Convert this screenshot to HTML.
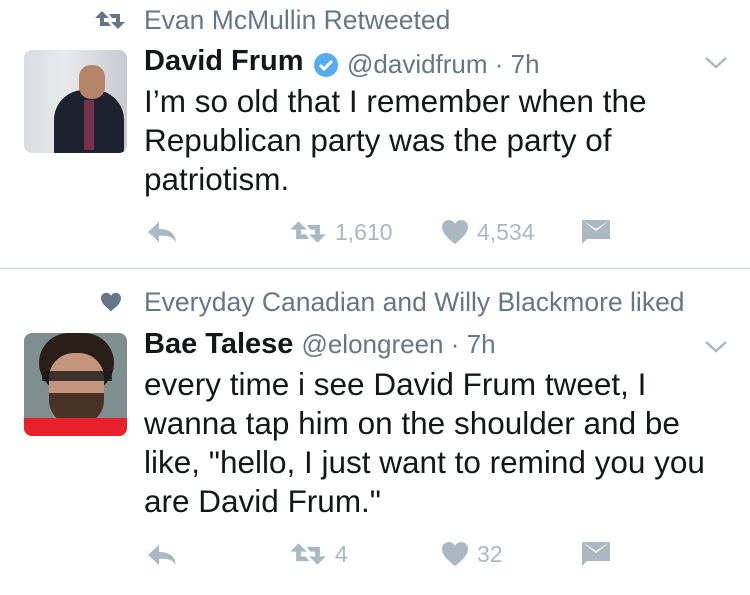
<!DOCTYPE html>
<html><head><meta charset="utf-8"><style>
body{margin:0;width:750px;height:595px;background:#fff;position:relative;overflow:hidden;font-family:"Liberation Sans",sans-serif;}
.a{position:absolute;white-space:nowrap;}
.ctx{font-size:26.5px;color:#657786;}
.name{font-size:29px;font-weight:bold;color:#14171a;}
.handle{font-size:26px;color:#657786;font-weight:normal;}
.body{font-size:31.5px;color:#14171a;line-height:39px;}
.cnt{font-size:23px;color:#aab8c2;}
.av{position:absolute;width:103px;height:103px;border-radius:8px;overflow:hidden;}
</style></head><body>
<svg class="a" style="left:94px;top:10px" width="32" height="20" viewBox="0 0 32 20"><path d="M8 1 L1 8 H6 V16 H17 L14 12 H10 V8 H15 Z M24 19 L31 12 H26 V4 H15 L18 8 H22 V12 H17 Z" fill="#657786"/></svg>
<div class="a ctx" style="left:144px;top:5px">Evan McMullin Retweeted</div>
<div class="av" style="left:24px;top:50px;background:linear-gradient(90deg,#d9dbe0 0%,#e8e9ec 40%,#c8cad0 100%)">
<div style="position:absolute;left:30px;top:40px;width:70px;height:70px;border-radius:30px 30px 0 0;background:#1e2230"></div>
<div style="position:absolute;left:55px;top:15px;width:26px;height:34px;border-radius:12px;background:#b58468"></div>
<div style="position:absolute;left:60px;top:50px;width:10px;height:50px;background:#7a3048"></div>
</div>
<div class="a name" style="left:144px;top:45px">David Frum</div>
<svg class="a" style="left:313px;top:52px" width="26" height="26" viewBox="0 0 26 26"><circle cx="13" cy="13" r="12" fill="#55acee"/><path d="M7 13 L11 17 L19 9" stroke="#fff" stroke-width="3" fill="none"/></svg>
<div class="a handle" style="left:347px;top:49px">@davidfrum · 7h</div>
<svg class="a" style="left:704px;top:56px" width="24" height="14" viewBox="0 0 24 14"><path d="M2 2 L12 11 L22 2" stroke="#aab8c2" stroke-width="2.5" fill="none"/></svg>
<div class="a body" style="left:144px;top:82px">I’m so old that I remember when the<br>Republican party was the party of<br>patriotism.</div>
<svg class="a" style="left:147px;top:220px" width="32" height="24" viewBox="0 0 32 24"><path d="M12 2 L1 12 L12 22 V16 C20 15 26 17 29 22 C28 13 22 9 12 9 Z" fill="#aab8c2"/></svg>
<svg class="a" style="left:289px;top:220px" width="38" height="24" viewBox="0 0 32 20"><path d="M8 1 L1 8 H6 V16 H17 L14 12 H10 V8 H15 Z M24 19 L31 12 H26 V4 H15 L18 8 H22 V12 H17 Z" fill="#aab8c2"/></svg>
<div class="a cnt" style="left:335px;top:219px">1,610</div>
<svg class="a" style="left:441px;top:219px" width="28" height="26" viewBox="0 0 28 26"><path d="M14 25 C5 18 1 13 1 8 C1 4 4 1 8 1 C11 1 13 3 14 5 C15 3 17 1 20 1 C24 1 27 4 27 8 C27 13 23 18 14 25 Z" fill="#aab8c2"/></svg>
<div class="a cnt" style="left:477px;top:219px">4,534</div>
<svg class="a" style="left:581px;top:219px" width="30" height="26" viewBox="0 0 30 26"><path d="M1 1 L15 12 L29 1 V20 H6 L1 25 Z" fill="#aab8c2"/><path d="M1 1 H29 L15 10 Z" fill="#aab8c2"/></svg>
<div class="a" style="left:0;top:268px;width:750px;height:1px;background:#ccd6dd"></div>
<svg class="a" style="left:100px;top:292px" width="22" height="20" viewBox="0 0 28 26"><path d="M14 25 C5 18 1 13 1 8 C1 4 4 1 8 1 C11 1 13 3 14 5 C15 3 17 1 20 1 C24 1 27 4 27 8 C27 13 23 18 14 25 Z" fill="#657786"/></svg>
<div class="a ctx" style="left:144px;top:287px">Everyday Canadian and Willy Blackmore liked</div>
<div class="av" style="left:24px;top:333px;background:#7f8f8f">
<div style="position:absolute;left:15px;top:0;width:75px;height:60px;border-radius:35px;background:#2a1e18"></div>
<div style="position:absolute;left:25px;top:20px;width:55px;height:70px;border-radius:25px;background:#c4957c"></div>
<div style="position:absolute;left:25px;top:60px;width:55px;height:32px;border-radius:0 0 25px 25px;background:#4a3226"></div>
<div style="position:absolute;left:18px;top:38px;width:70px;height:10px;background:#1a1a1a;opacity:.8"></div>
<div style="position:absolute;left:0;top:85px;width:103px;height:18px;background:#e8202a"></div>
</div>
<div class="a name" style="left:144px;top:328px">Bae Talese <span class="handle">@elongreen · 7h</span></div>
<svg class="a" style="left:704px;top:340px" width="24" height="14" viewBox="0 0 24 14"><path d="M2 2 L12 11 L22 2" stroke="#aab8c2" stroke-width="2.5" fill="none"/></svg>
<div class="a body" style="left:144px;top:365px">every time i see David Frum tweet, I<br>wanna tap him on the shoulder and be<br>like, "hello, I just want to remind you you<br>are David Frum."</div>
<svg class="a" style="left:147px;top:543px" width="32" height="24" viewBox="0 0 32 24"><path d="M12 2 L1 12 L12 22 V16 C20 15 26 17 29 22 C28 13 22 9 12 9 Z" fill="#aab8c2"/></svg>
<svg class="a" style="left:289px;top:542px" width="38" height="24" viewBox="0 0 32 20"><path d="M8 1 L1 8 H6 V16 H17 L14 12 H10 V8 H15 Z M24 19 L31 12 H26 V4 H15 L18 8 H22 V12 H17 Z" fill="#aab8c2"/></svg>
<div class="a cnt" style="left:335px;top:541px">4</div>
<svg class="a" style="left:441px;top:541px" width="28" height="26" viewBox="0 0 28 26"><path d="M14 25 C5 18 1 13 1 8 C1 4 4 1 8 1 C11 1 13 3 14 5 C15 3 17 1 20 1 C24 1 27 4 27 8 C27 13 23 18 14 25 Z" fill="#aab8c2"/></svg>
<div class="a cnt" style="left:477px;top:541px">32</div>
<svg class="a" style="left:581px;top:541px" width="30" height="26" viewBox="0 0 30 26"><path d="M1 1 L15 12 L29 1 V20 H6 L1 25 Z" fill="#aab8c2"/><path d="M1 1 H29 L15 10 Z" fill="#aab8c2"/></svg>
</body></html>
